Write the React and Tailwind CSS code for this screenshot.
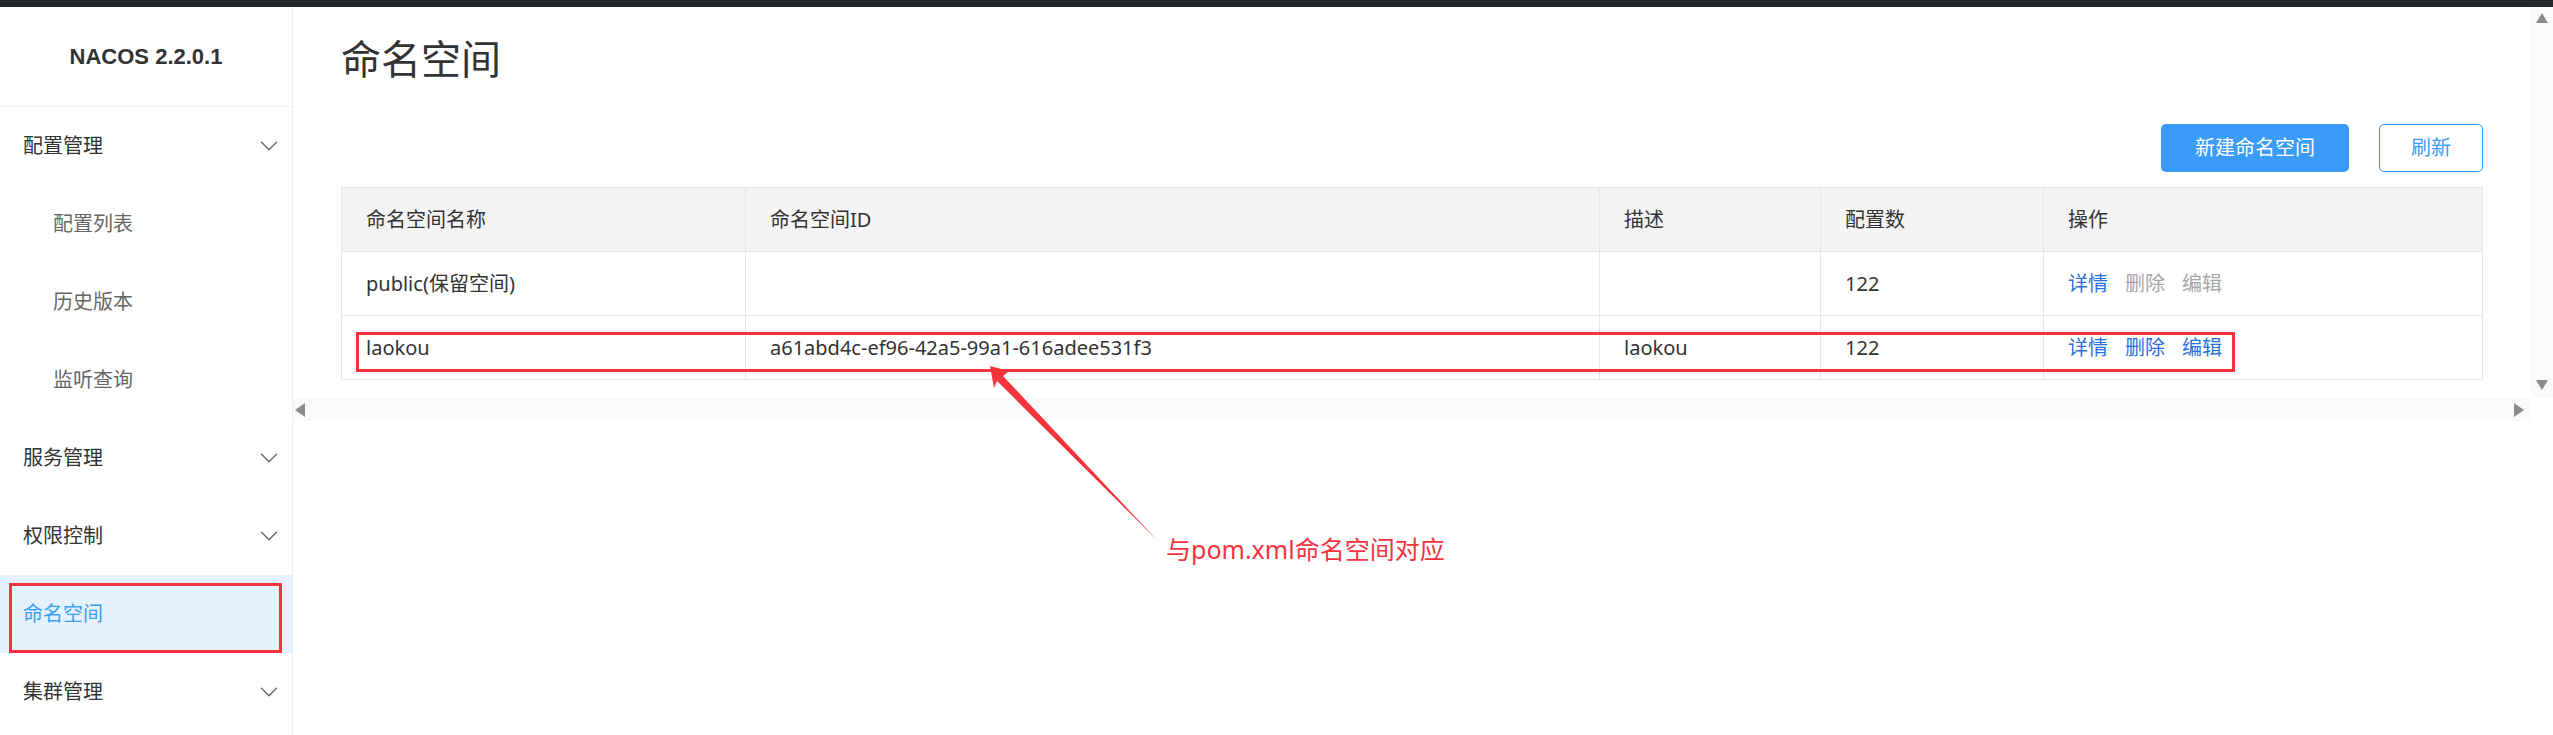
import { ChevronDown } from "lucide-react";

const menu = [
  { label: "配置管理", top: true, chevron: true },
  { label: "配置列表" },
  { label: "历史版本" },
  { label: "监听查询" },
  { label: "服务管理", top: true, chevron: true },
  { label: "权限控制", top: true, chevron: true },
  { label: "命名空间", top: true, active: true },
  { label: "集群管理", top: true, chevron: true },
];

const rows = [
  { name: "public(保留空间)", id: "", desc: "", count: "122", locked: true },
  { name: "laokou", id: "a61abd4c-ef96-42a5-99a1-616adee531f3", desc: "laokou", count: "122" },
];

const Tri = ({ dir }) => {
  const pts = {
    up: "0,10 6,0 12,10",
    down: "0,0 12,0 6,10",
    left: "10,0 10,14 0,7",
    right: "0,0 0,14 10,7",
  }[dir];
  const vertical = dir === "up" || dir === "down";
  return (
    <svg width={vertical ? 12 : 10} height={vertical ? 10 : 14} viewBox={vertical ? "0 0 12 10" : "0 0 10 14"}>
      <polygon points={pts} fill="#8c8c8c" />
    </svg>
  );
};

const Sidebar = () => (
  <div className="w-[293px] shrink-0 border-r border-[#eeeeee] bg-white">
    <div className="h-[100px] border-b border-[#eeeeee] flex items-center justify-center">
      <span className="text-[22px] font-bold text-[#333] font-['Liberation_Sans',sans-serif]">NACOS 2.2.0.1</span>
    </div>
    {menu.map((m, i) => (
      <div
        key={i}
        className={`relative h-[78px] flex items-center justify-between pr-[8px] ${m.active ? "bg-[#e5f2fd]" : ""} ${
          m.top ? "pl-[23px]" : "pl-[53px]"
        }`}
      >
        <span
          className={`text-[20px] leading-[24px] ${
            m.active ? "text-[#3d9ff6]" : m.top ? "text-[#333]" : "text-[#666]"
          }`}
        >
          {m.label}
        </span>
        {m.chevron && <ChevronDown size={30} strokeWidth={1.1} className="text-[#666]" />}
        {m.active && (
          <div className="absolute left-[9px] top-[8px] w-[273px] h-[70px] border-[3px] border-[#f5333d]" />
        )}
      </div>
    ))}
  </div>
);

const Table = () => (
  <div className="relative">
    <table className="w-full border-collapse border border-[#e6e6e6] text-[20px] text-[#333] table-fixed">
      <colgroup>
        <col className="w-[404px]" />
        <col className="w-[854px]" />
        <col className="w-[221px]" />
        <col className="w-[223px]" />
        <col />
      </colgroup>
      <thead>
        <tr className="bg-[#f4f4f4] h-[64px]">
          {["命名空间名称", "命名空间ID", "描述", "配置数", "操作"].map((h) => (
            <th key={h} className="border border-[#e6e6e6] px-[24px] text-left font-normal">
              {h}
            </th>
          ))}
        </tr>
      </thead>
      <tbody>
        {rows.map((r, i) => (
          <tr key={i} className="h-[64px]">
            <td className="border border-[#e6e6e6] px-[24px]">{r.name}</td>
            <td className="border border-[#e6e6e6] px-[24px]">{r.id}</td>
            <td className="border border-[#e6e6e6] px-[24px]">{r.desc}</td>
            <td className="border border-[#e6e6e6] px-[24px]">{r.count}</td>
            <td className="border border-[#e6e6e6] px-[24px]">
              <div className="flex gap-[17px]">
                <span className="text-[#2a6fdb]">详情</span>
                <span className={r.locked ? "text-[#a6a6a6]" : "text-[#2a6fdb]"}>删除</span>
                <span className={r.locked ? "text-[#a6a6a6]" : "text-[#2a6fdb]"}>编辑</span>
              </div>
            </td>
          </tr>
        ))}
      </tbody>
    </table>
    <div className="absolute left-[15px] top-[145px] w-[1879px] h-[40px] border-[3px] border-[#f5333d] pointer-events-none" />
  </div>
);

export default function App() {
  return (
    <div className="relative w-[2553px] h-[735px] overflow-hidden bg-white flex flex-col font-['Noto_Sans','Noto_Sans_CJK_SC',sans-serif]">
      <div className="h-[7px] bg-[#24282d] shrink-0" />
      <div className="flex flex-1 min-h-0">
        <Sidebar />
        <div className="flex-1 flex flex-col">
          <div className="h-[391px] flex">
            <div className="flex-1 px-[48px] pt-[30px]">
              <h1 className="text-[40px] leading-[44px] text-[#333] font-normal">命名空间</h1>
              <div className="flex justify-end gap-[30px] mt-[43px]">
                <button className="w-[188px] h-[48px] rounded-[5px] bg-[#3a9bfb] text-white text-[20px]">
                  新建命名空间
                </button>
                <button className="w-[104px] h-[48px] rounded-[5px] border border-[#3a9bfb] text-[#3a9bfb] text-[20px] bg-white">
                  刷新
                </button>
              </div>
              <div className="mt-[15px]">
                <Table />
              </div>
            </div>
            <div className="w-[22px] bg-[#fafafa] flex flex-col items-center justify-between pt-[6px] pb-[8px]">
              <Tri dir="up" />
              <Tri dir="down" />
            </div>
          </div>
          <div className="h-[23px] flex">
            <div className="flex-1 bg-[#fafafa] flex items-center justify-between pl-[2px] pr-[7px]">
              <Tri dir="left" />
              <Tri dir="right" />
            </div>
            <div className="w-[22px] bg-white" />
          </div>
        </div>
      </div>

      <svg className="absolute inset-0 pointer-events-none" width="2553" height="735" viewBox="0 0 2553 735">
        <polygon
          points="990,366 1009,371 1003,376 1157,540 997,381 994,388"
          fill="#f5333d"
        />
      </svg>
      <div className="absolute left-[1166px] top-[533px] text-[25px] leading-[32px] text-[#f5333d]">
        与pom.xml命名空间对应
      </div>
    </div>
  );
}
